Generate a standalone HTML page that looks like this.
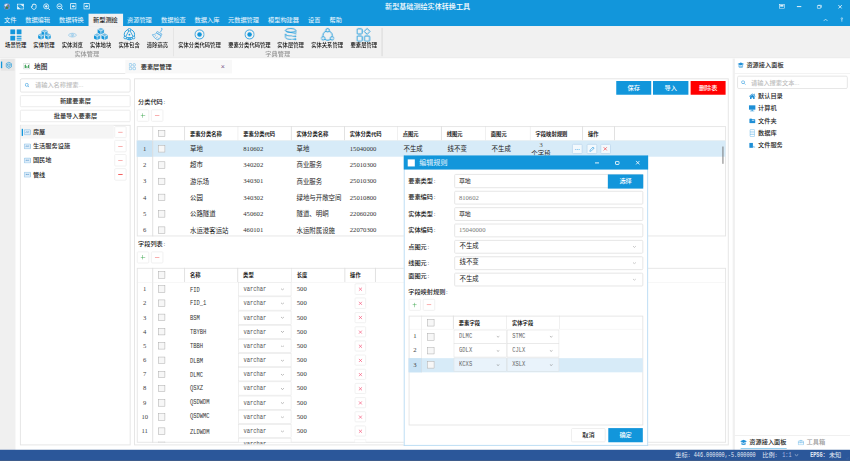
<!DOCTYPE html>
<html lang="zh-CN">
<head>
<meta charset="utf-8">
<title>新型基础测绘实体转换工具</title>
<style>
html,body{margin:0;padding:0;background:#f0f0f0;}
body{width:850px;height:461px;overflow:hidden;position:relative;}
#stage{position:absolute;left:0;top:0;width:1920px;height:1041.3px;transform-origin:0 0;transform:scale(0.4427083);
 font-family:"Liberation Sans","Noto Sans CJK SC",sans-serif;overflow:hidden;font-weight:500;}
#stage div{position:absolute;box-sizing:border-box;}
#stage .num{font-family:"Liberation Serif","Noto Sans CJK SC",serif;}
#stage .mono{font-family:"Liberation Mono","Noto Sans CJK SC",monospace;}
#stage .stat{font-family:"Liberation Serif","Noto Sans CJK SC",serif;}
</style>
</head>
<body>
<div id="stage">
<div style="left:0px;top:0px;width:1920px;height:58.5px;background:#1296db;"></div>
<svg style="position:absolute;left:7.91px;top:6.78px;" width="15.36" height="15.36" viewBox="0 0 24 24"><circle cx="12" cy="12" r="11.500" fill="#4f86c8"/><path d="M3 7c3-3 8-5 12-3-1 3-4 3-5 5s2 3 1 5-4 1-5-1-2-3-3-6z" fill="#e9eef6"/><path d="M8 11c3 0 6 1 8 4s-1 6-4 6-2-3-4-5-2-3 0-5z" fill="#4a7d3c"/><path d="M14 5c3 0 6 3 7 7-2 0-4-1-5-3s-2-2-2-4z" fill="#b9763a"/><path d="M4 17c3 1 4 3 6 5-3 0-5-2-6-5z" fill="#2b3f7a"/><circle cx="12" cy="12" r="11" fill="none" stroke="#a9c6e8" stroke-width="1.200"/></svg>
<svg style="position:absolute;left:37.72px;top:8.13px;" width="16.72" height="13.55" viewBox="0 0 28 22"><rect x="1.500" y="1.500" width="25" height="19" fill="none" stroke="#fff" stroke-width="2.600"/><path d="M12 2h14v11z" fill="#fff" opacity=".9"/><path d="M2 9l12 11H2z" fill="#fff" opacity=".85"/><path d="M2 3L26 19" stroke="#fff" stroke-width="1.200" opacity=".5"/></svg>
<svg style="position:absolute;left:67.54px;top:6.78px;" width="16.72" height="15.81" viewBox="0 0 24 24"><path d="M7 12V6.5a1.6 1.6 0 0 1 3.2 0V4.5a1.6 1.6 0 0 1 3.2 0V5a1.6 1.6 0 0 1 3.2 0v1.6a1.6 1.6 0 0 1 3.2 0V14c0 4.5-3 7.5-7.3 7.5-3.4 0-5.200-1.600-6.800-4.400L3.300 13.300c-.7-1.300.800-2.500 2-1.500z" fill="none" stroke="#fff" stroke-width="2.600" stroke-linejoin="round"/></svg>
<svg style="position:absolute;left:97.13px;top:6.55px;" width="16.72" height="16.72" viewBox="0 0 24 24"><circle cx="10.5" cy="10.500" r="8.200" fill="none" stroke="#fff" stroke-width="2.400"/><path d="M16.500 16.500L22.500 22.500" stroke="#fff" stroke-width="2.800"/><path d="M10.500 6v9M6 10.500h9" stroke="#fff" stroke-width="3"/></svg>
<svg style="position:absolute;left:126.72px;top:6.55px;" width="16.72" height="16.72" viewBox="0 0 24 24"><circle cx="10.5" cy="10.500" r="8.200" fill="none" stroke="#fff" stroke-width="2.400"/><path d="M16.500 16.500L22.500 22.500" stroke="#fff" stroke-width="2.800"/><path d="M6 10.500h9" stroke="#fff" stroke-width="3"/></svg>
<svg style="position:absolute;left:157.67px;top:7.45px;" width="15.36" height="14.46" viewBox="0 0 24 24"><rect x="2" y="2" width="20" height="20" fill="none" stroke="#fff" stroke-width="2.800"/><path d="M18 12H11" stroke="#fff" stroke-width="3.600" fill="none"/><path d="M6 12l6.500-5.500v11z" fill="#fff"/></svg>
<svg style="position:absolute;left:187.93px;top:7.45px;" width="15.36" height="14.46" viewBox="0 0 24 24"><rect x="2" y="2" width="20" height="20" fill="none" stroke="#fff" stroke-width="2.800"/><path d="M6 12H13" stroke="#fff" stroke-width="3.600" fill="none"/><path d="M18 12l-6.500-5.500v11z" fill="#fff"/></svg>
<div style="left:965.87px;transform:translateX(-50%);top:2.68px;font-size:16px;line-height:24.00px;color:#fff;white-space:nowrap;">新型基础测绘实体转换工具</div>
<svg style="position:absolute;left:1759.4px;top:9.49px;" width="14" height="10.62" viewBox="0 0 24 20"><rect x="1.2" y="1.2" width="21.600" height="17.600" fill="none" stroke="#fff" stroke-width="2.400"/><rect x="5" y="5" width="14" height="6" fill="#fff"/></svg>
<div style="left:1800.06px;top:14px;width:10.39px;height:1.69px;background:#fff;"></div>
<svg style="position:absolute;left:1845.46px;top:10.28px;" width="11.75" height="9.94" viewBox="0 0 22 18"><rect x="1.700" y="4.500" width="15" height="12" rx="2.500" fill="none" stroke="#fff" stroke-width="3.200"/><path d="M6 2h11.500c2 0 3 1 3 3v8" fill="none" stroke="#fff" stroke-width="2.400"/></svg>
<svg style="position:absolute;left:1891.54px;top:9.6px;" width="11.29" height="10.84" viewBox="0 0 20 20"><path d="M2.500 2.500l15 15M17.500 2.500L2.500 17.500" stroke="#fff" stroke-width="3.200"/></svg>
<svg style="position:absolute;left:1858.79px;top:42.01px;" width="11.75" height="6.78" viewBox="0 0 20 12"><path d="M2 10l8-8 8 8" stroke="#fff" stroke-width="2.400" fill="none"/></svg>
<svg style="position:absolute;left:1897.64px;top:39.3px;" width="7.23" height="10.84" viewBox="0 0 12 20"><circle cx="6" cy="5" r="3.400" fill="none" stroke="#fff" stroke-width="2.400"/><path d="M6 8.500v10" stroke="#fff" stroke-width="2.400"/></svg>
<div style="left:199.68px;top:31.17px;width:78.16px;height:28.01px;background:#f1f1f1;"></div>
<div style="left:9.26px;top:34.68px;font-size:14px;line-height:21.00px;color:#f2f9fe;white-space:nowrap;font-weight:400;">文件</div>
<div style="left:56.92px;top:34.68px;font-size:14px;line-height:21.00px;color:#f2f9fe;white-space:nowrap;font-weight:400;">数据编辑</div>
<div style="left:133.27px;top:34.68px;font-size:14px;line-height:21.00px;color:#f2f9fe;white-space:nowrap;font-weight:400;">数据转换</div>
<div style="left:210.07px;top:34.68px;font-size:14px;line-height:21.00px;color:#222;white-space:nowrap;">新型测绘</div>
<div style="left:286.87px;top:34.68px;font-size:14px;line-height:21.00px;color:#f2f9fe;white-space:nowrap;font-weight:400;">资源管理</div>
<div style="left:363.67px;top:34.68px;font-size:14px;line-height:21.00px;color:#f2f9fe;white-space:nowrap;font-weight:400;">数据检查</div>
<div style="left:439.57px;top:34.68px;font-size:14px;line-height:21.00px;color:#f2f9fe;white-space:nowrap;font-weight:400;">数据入库</div>
<div style="left:515.01px;top:34.68px;font-size:14px;line-height:21.00px;color:#f2f9fe;white-space:nowrap;font-weight:400;">元数据管理</div>
<div style="left:605.36px;top:34.68px;font-size:14px;line-height:21.00px;color:#f2f9fe;white-space:nowrap;font-weight:400;">模型构建器</div>
<div style="left:695.72px;top:34.68px;font-size:14px;line-height:21.00px;color:#f2f9fe;white-space:nowrap;font-weight:400;">设置</div>
<div style="left:744.28px;top:34.68px;font-size:14px;line-height:21.00px;color:#f2f9fe;white-space:nowrap;font-weight:400;">帮助</div>
<div style="left:0px;top:58.5px;width:1920px;height:73.41px;background:#f1f1f1;"></div>
<div style="left:0px;top:130.11px;width:1920px;height:1.81px;background:#e9e9e9;"></div>
<div style="left:391.68px;top:63.25px;width:1.13px;height:63.25px;background:#d5d5d5;"></div>
<div style="left:862.42px;top:63.25px;width:1.13px;height:63.25px;background:#d5d5d5;"></div>
<div style="left:196.07px;transform:translateX(-50%);top:111.70px;font-size:14px;line-height:21.00px;color:#999;white-space:nowrap;">实体管理</div>
<div style="left:627.28px;transform:translateX(-50%);top:111.70px;font-size:14px;line-height:21.00px;color:#999;white-space:nowrap;">字典管理</div>
<div style="left:35.46px;transform:translateX(-50%);top:93.10px;font-size:12px;line-height:18.00px;color:#111;white-space:nowrap;">场景管理</div>
<div style="left:99.39px;transform:translateX(-50%);top:93.10px;font-size:12px;line-height:18.00px;color:#111;white-space:nowrap;">实体管理</div>
<div style="left:163.31px;transform:translateX(-50%);top:93.10px;font-size:12px;line-height:18.00px;color:#111;white-space:nowrap;">实体浏览</div>
<div style="left:227.24px;transform:translateX(-50%);top:93.10px;font-size:12px;line-height:18.00px;color:#111;white-space:nowrap;">实体地块</div>
<div style="left:291.61px;transform:translateX(-50%);top:93.10px;font-size:12px;line-height:18.00px;color:#111;white-space:nowrap;">实体包含</div>
<div style="left:355.76px;transform:translateX(-50%);top:93.10px;font-size:12px;line-height:18.00px;color:#111;white-space:nowrap;">清除高亮</div>
<div style="left:450.64px;transform:translateX(-50%);top:93.10px;font-size:12px;line-height:18.00px;color:#111;white-space:nowrap;">实体分类代码管理</div>
<div style="left:563.35px;transform:translateX(-50%);top:93.10px;font-size:12px;line-height:18.00px;color:#111;white-space:nowrap;">要素分类代码管理</div>
<div style="left:656.41px;transform:translateX(-50%);top:93.10px;font-size:12px;line-height:18.00px;color:#111;white-space:nowrap;">实体层管理</div>
<div style="left:738.86px;transform:translateX(-50%);top:93.10px;font-size:12px;line-height:18.00px;color:#111;white-space:nowrap;">实体关系管理</div>
<div style="left:821.76px;transform:translateX(-50%);top:93.10px;font-size:12px;line-height:18.00px;color:#111;white-space:nowrap;">要素层管理</div>
<svg style="position:absolute;left:22.59px;top:66.07px;" width="25.98" height="25.98" viewBox="0 0 24 24"><rect x="0" y="0" width="10.400" height="10.400" rx="1.200" fill="#1296db"/><rect x="13.600" y="0" width="10.400" height="10.400" rx="1.200" fill="#1296db"/><rect x="0" y="13.600" width="10.400" height="10.400" rx="1.200" fill="#1296db"/><rect x="13.600" y="13.600" width="10.400" height="2.400" fill="#1296db"/><rect x="13.600" y="17.600" width="10.400" height="2.400" fill="#1296db"/><rect x="13.600" y="21.600" width="10.400" height="2.400" fill="#1296db"/></svg>
<svg style="position:absolute;left:85.61px;top:66.18px;" width="29.36" height="24.85" viewBox="0 0 24 20"><path d="M6.5 2.75 L12.0 0 L17.5 2.75 L12.0 5.5 Z" fill="#1296db" opacity=".55"/><path d="M6.5 2.75 L12.0 5.5 L12.0 11.55 L6.5 8.8 Z" fill="#1296db"/><path d="M17.5 2.75 L12.0 5.5 L12.0 11.55 L17.5 8.8 Z" fill="#1296db" opacity=".8"/><path d="M6.5 2.75 L12.0 5.5 L17.5 2.75 M12.0 5.5 L12.0 11.55" stroke="#fff" stroke-width=".9" fill="none"/><path d="M0 10.25 L5.5 7.5 L11 10.25 L5.5 13.0 Z" fill="#1296db" opacity=".55"/><path d="M0 10.25 L5.5 13.0 L5.5 19.05 L0 16.3 Z" fill="#1296db"/><path d="M11 10.25 L5.5 13.0 L5.5 19.05 L11 16.3 Z" fill="#1296db" opacity=".8"/><path d="M0 10.25 L5.5 13.0 L11 10.25 M5.5 13.0 L5.5 19.05" stroke="#fff" stroke-width=".9" fill="none"/><path d="M13 10.25 L18.5 7.5 L24 10.25 L18.5 13.0 Z" fill="#1296db" opacity=".55"/><path d="M13 10.25 L18.5 13.0 L18.5 19.05 L13 16.3 Z" fill="#1296db"/><path d="M24 10.25 L18.5 13.0 L18.5 19.05 L24 16.3 Z" fill="#1296db" opacity=".8"/><path d="M13 10.25 L18.5 13.0 L24 10.25 M18.5 13.0 L18.5 19.05" stroke="#fff" stroke-width=".9" fill="none"/></svg>
<svg style="position:absolute;left:152.92px;top:73.19px;" width="21.23" height="12.65" viewBox="0 0 32 20"><path d="M1 10C7 1 25 1 31 10C25 19 7 19 1 10Z" fill="none" stroke="#6db9e8" stroke-width="1.800"/><circle cx="16" cy="10" r="5" fill="none" stroke="#6db9e8" stroke-width="1.800"/><circle cx="16" cy="10" r="2" fill="#6db9e8"/></svg>
<svg style="position:absolute;left:212.33px;top:61.89px;" width="31.62" height="30.27" viewBox="0 0 24 22"><path d="M6.5 2.75 L12.0 0 L17.5 2.75 L12.0 5.5 Z" fill="#1296db" opacity=".55"/><path d="M6.5 2.75 L12.0 5.5 L12.0 11.55 L6.5 8.8 Z" fill="#1296db"/><path d="M17.5 2.75 L12.0 5.5 L12.0 11.55 L17.5 8.8 Z" fill="#1296db" opacity=".8"/><path d="M6.5 2.75 L12.0 5.5 L17.5 2.75 M12.0 5.5 L12.0 11.55" stroke="#fff" stroke-width=".9" fill="none"/><path d="M0 12.25 L5.5 9.5 L11 12.25 L5.5 15.0 Z" fill="#1296db" opacity=".55"/><path d="M0 12.25 L5.5 15.0 L5.5 21.05 L0 18.3 Z" fill="#1296db"/><path d="M11 12.25 L5.5 15.0 L5.5 21.05 L11 18.3 Z" fill="#1296db" opacity=".8"/><path d="M0 12.25 L5.5 15.0 L11 12.25 M5.5 15.0 L5.5 21.05" stroke="#fff" stroke-width=".9" fill="none"/><path d="M13 12.25 L18.5 9.5 L24 12.25 L18.5 15.0 Z" fill="#1296db" opacity=".55"/><path d="M13 12.25 L18.5 15.0 L18.5 21.05 L13 18.3 Z" fill="#1296db"/><path d="M24 12.25 L18.5 15.0 L18.5 21.05 L24 18.3 Z" fill="#1296db" opacity=".8"/><path d="M13 12.25 L18.5 15.0 L24 12.25 M18.5 15.0 L18.5 21.05" stroke="#fff" stroke-width=".9" fill="none"/></svg>
<svg style="position:absolute;left:277.5px;top:63.25px;" width="28.69" height="29.36" viewBox="0 0 24 25"><circle cx="12" cy="13" r="10" fill="none" stroke="#1296db" stroke-width="1.700"/><path d="M12 3.500L4 18.500h16z" fill="none" stroke="#1296db" stroke-width="1.500"/><circle cx="12" cy="3.400" r="2.500" fill="#f1f1f1" stroke="#1296db" stroke-width="1.500"/><circle cx="3.800" cy="18.600" r="2.500" fill="#f1f1f1" stroke="#1296db" stroke-width="1.500"/><circle cx="20.200" cy="18.600" r="2.500" fill="#f1f1f1" stroke="#1296db" stroke-width="1.500"/><circle cx="12" cy="13" r="1.700" fill="#1296db"/><rect x="8.500" y="20" width="7" height="2.400" fill="#1296db"/></svg>
<svg style="position:absolute;left:341.99px;top:61.89px;" width="28.46" height="30.27" viewBox="0 0 22 25"><path d="M17 1l2.500 1.500-3.500 6.500" fill="none" stroke="#5ab0e6" stroke-width="1.600"/><path d="M10 7.500l9 5-1.500 2.500-9-5z" fill="none" stroke="#5ab0e6" stroke-width="1.500"/><path d="M8.500 10.500C6 13 3.500 13.500 1 13.500c2 4 6 8.500 11 10 2.500-2 4.500-5 5.500-8z" fill="none" stroke="#5ab0e6" stroke-width="1.500"/><path d="M5 16.500l3-1.500M8 19.500l3-2M11 22l2.500-2.500" stroke="#5ab0e6" stroke-width="1.200"/></svg>
<svg style="position:absolute;left:438.89px;top:66.41px;" width="23.49" height="23.49" viewBox="0 0 24 24"><circle cx="12" cy="12" r="10.600" fill="none" stroke="#1296db" stroke-width="2"/><circle cx="12" cy="12" r="5.200" fill="#1296db"/></svg>
<svg style="position:absolute;left:551.6px;top:66.41px;" width="23.49" height="23.49" viewBox="0 0 24 24"><circle cx="12" cy="12" r="10.600" fill="none" stroke="#1296db" stroke-width="2"/><circle cx="12" cy="12" r="5.200" fill="#1296db"/></svg>
<svg style="position:absolute;left:643.31px;top:63.25px;" width="28.01" height="30.27" viewBox="0 0 23 25"><ellipse cx="11" cy="4.500" rx="9.500" ry="3.500" fill="none" stroke="#1296db" stroke-width="1.500"/><path d="M1.500 4.500c0 5 19 3 19 7.500M1.500 11c0 5 12 3.500 12 3.500M1.500 11c0 2 0 4.500 0 6.500c0 3 6 4 11 3.700M20.500 4.500v6" fill="none" stroke="#1296db" stroke-width="1.500"/><circle cx="19.500" cy="15.500" r="1.700" fill="#1296db"/><circle cx="19.500" cy="21" r="1.700" fill="#1296db"/><path d="M14 15.500h3.500M14 21h3.500" stroke="#1296db" stroke-width="1.500"/></svg>
<svg style="position:absolute;left:724.86px;top:62.8px;" width="29.82" height="30.72" viewBox="0 0 24 25"><circle cx="12" cy="14" r="8.600" fill="none" stroke="#1296db" stroke-width="1.700"/><circle cx="12" cy="4.200" r="3.200" fill="#f1f1f1" stroke="#1296db" stroke-width="1.600"/><circle cx="3.800" cy="19" r="3.200" fill="#f1f1f1" stroke="#1296db" stroke-width="1.600"/><circle cx="20.200" cy="19" r="3.200" fill="#f1f1f1" stroke="#1296db" stroke-width="1.600"/></svg>
<svg style="position:absolute;left:805.04px;top:63.02px;" width="32.53" height="31.17" viewBox="0 0 25 24"><rect x="1" y="1.500" width="9" height="9" rx="1.500" fill="none" stroke="#1296db" stroke-width="1.600"/><path d="M18.500 0.800l5 5.200-5 5.200-5-5.200z" fill="none" stroke="#1296db" stroke-width="1.600"/><rect x="1" y="14" width="9" height="9" rx="1.500" fill="none" stroke="#1296db" stroke-width="1.600"/><rect x="14" y="14" width="9" height="9" rx="1.500" fill="none" stroke="#1296db" stroke-width="1.600"/></svg>
<div style="left:0px;top:132.14px;width:1920px;height:883.88px;background:#f0f0f0;"></div>
<div style="left:35.46px;top:132.14px;width:1620.03px;height:883.88px;background:#fff;"></div>
<div style="left:2.26px;top:133.04px;width:31.17px;height:26.65px;background:#e6e6e6;"></div>
<div style="left:2.26px;top:139.14px;width:2.48px;height:14.46px;background:#1296db;"></div>
<svg style="position:absolute;left:12.42px;top:138.92px;" width="15.81" height="16.72" viewBox="0 0 24 24"><path d="M12 1.500l9 5v11l-9 5-9-5v-11z" fill="none" stroke="#1296db" stroke-width="2.200"/><ellipse cx="12" cy="9.500" rx="4.600" ry="2.200" fill="none" stroke="#1296db" stroke-width="1.800"/><path d="M7.400 9.500v5c0 1.200 2 2.200 4.600 2.200s4.600-1 4.600-2.200v-5" fill="none" stroke="#1296db" stroke-width="1.800"/></svg>
<div style="left:283.03px;top:135.08px;width:240.56px;height:31.17px;background:#f8f8f8;"></div>
<div style="left:44.27px;top:165.35px;width:238.76px;height:1.36px;background:#e6e6e6;"></div>
<svg style="position:absolute;left:52.63px;top:143.44px;" width="14.91" height="13.55" viewBox="0 0 22 20"><rect x="1" y="1" width="20" height="18" fill="#fff" stroke="#9aa" stroke-width="1.400"/><path d="M4 16V6l4-2v12zM10 16V8l3 2v6zM15 16V5l3 1v10z" fill="#2e9a4a"/></svg>
<div style="left:76.8px;top:139.19px;font-size:15px;line-height:22.50px;color:#222;white-space:nowrap;">地图</div>
<svg style="position:absolute;left:291.39px;top:141.85px;" width="15.81" height="17.17" viewBox="0 0 24 24.500"><rect x="1" y="1.500" width="9" height="9" rx="2.500" fill="none" stroke="#4aa8e2" stroke-width="1.600"/><rect x="14" y="1.500" width="9" height="9" rx="4.500" fill="none" stroke="#4aa8e2" stroke-width="1.600"/><rect x="1" y="14" width="9" height="9" rx="2.500" fill="none" stroke="#4aa8e2" stroke-width="1.600"/><rect x="14" y="14" width="9" height="9" rx="2.500" fill="none" stroke="#4aa8e2" stroke-width="1.600"/></svg>
<div style="left:317.82px;top:139.94px;font-size:14px;line-height:21.00px;color:#222;white-space:nowrap;font-weight:500;">要素层管理</div>
<div style="left:503.27px;transform:translateX(-50%);top:138.66px;font-size:16px;line-height:24.00px;color:#7a5a8a;white-space:nowrap;font-weight:400;">×</div>
<div style="left:45.4px;top:176.87px;width:249.37px;height:32.08px;background:#fff;border:2px solid #e3e3e3;border-radius:4px;"></div>
<svg style="position:absolute;left:55.79px;top:187.48px;" width="10.39" height="10.84" viewBox="0 0 20 20"><circle cx="8.500" cy="8.500" r="6.500" fill="none" stroke="#3a9fe0" stroke-width="2.800"/><path d="M13.500 13.500L19 19" stroke="#3a9fe0" stroke-width="3"/></svg>
<div style="left:79.06px;top:182.40px;font-size:14px;line-height:21.00px;color:#bdbdbd;white-space:nowrap;">请输入名称搜索...</div>
<div style="left:45.4px;top:214.59px;width:249.37px;height:27.78px;background:#fff;border:2px solid #e9e9e9;border-radius:3px;"></div>
<div style="left:170.32px;transform:translateX(-50%);top:218.09px;font-size:14px;line-height:21.00px;color:#222;white-space:nowrap;">新建要素层</div>
<div style="left:45.4px;top:248.24px;width:249.37px;height:28.24px;background:#fff;border:2px solid #e9e9e9;border-radius:3px;"></div>
<div style="left:170.32px;transform:translateX(-50%);top:251.75px;font-size:14px;line-height:21.00px;color:#222;white-space:nowrap;">批量导入要素层</div>
<div style="left:45.4px;top:281.9px;width:249.37px;height:724.4px;background:#fff;border:2px solid #e3e3e3;"></div>
<div style="left:46.76px;top:283.48px;width:210.3px;height:29.82px;background:#f5f5f5;"></div>
<div style="left:49.13px;top:291.16px;width:2.71px;height:15.59px;background:#1296db;"></div>
<svg style="position:absolute;left:53.99px;top:292.29px;" width="15.59" height="13.33" viewBox="0 0 24 20"><rect x="1" y="1" width="22" height="18" rx="2" fill="#dcecf9" stroke="#5aa7dc" stroke-width="1.600"/><path d="M6 11c2-3 4-3 6 0M12 9h6" stroke="#2c7fc0" stroke-width="1.800" fill="none"/></svg>
<div style="left:74.32px;top:288.12px;font-size:14px;line-height:21.00px;color:#222;white-space:nowrap;">房屋</div>
<div style="left:258.18px;top:284.61px;width:28.24px;height:27.78px;background:#fff;border:2px solid #efefef;border-radius:3px;"></div>
<div style="left:267.22px;top:297.94px;width:9.49px;height:1.36px;background:#f24a4a;"></div>
<svg style="position:absolute;left:53.99px;top:324.14px;" width="15.59" height="13.33" viewBox="0 0 24 20"><rect x="1" y="1" width="22" height="18" rx="2" fill="#dcecf9" stroke="#5aa7dc" stroke-width="1.600"/><path d="M6 11c2-3 4-3 6 0M12 9h6" stroke="#2c7fc0" stroke-width="1.800" fill="none"/></svg>
<div style="left:74.32px;top:319.97px;font-size:14px;line-height:21.00px;color:#222;white-space:nowrap;">生活服务设施</div>
<div style="left:258.18px;top:316.46px;width:28.24px;height:27.78px;background:#fff;border:2px solid #efefef;border-radius:3px;"></div>
<div style="left:267.22px;top:329.79px;width:9.49px;height:1.36px;background:#f24a4a;"></div>
<svg style="position:absolute;left:53.99px;top:355.99px;" width="15.59" height="13.33" viewBox="0 0 24 20"><rect x="1" y="1" width="22" height="18" rx="2" fill="#dcecf9" stroke="#5aa7dc" stroke-width="1.600"/><path d="M6 11c2-3 4-3 6 0M12 9h6" stroke="#2c7fc0" stroke-width="1.800" fill="none"/></svg>
<div style="left:74.32px;top:351.82px;font-size:14px;line-height:21.00px;color:#222;white-space:nowrap;">国民地</div>
<div style="left:258.18px;top:348.31px;width:28.24px;height:27.78px;background:#fff;border:2px solid #efefef;border-radius:3px;"></div>
<div style="left:267.22px;top:361.64px;width:9.49px;height:1.36px;background:#f24a4a;"></div>
<svg style="position:absolute;left:53.99px;top:387.84px;" width="15.59" height="13.33" viewBox="0 0 24 20"><rect x="1" y="1" width="22" height="18" rx="2" fill="#dcecf9" stroke="#5aa7dc" stroke-width="1.600"/><path d="M6 11c2-3 4-3 6 0M12 9h6" stroke="#2c7fc0" stroke-width="1.800" fill="none"/></svg>
<div style="left:74.32px;top:383.66px;font-size:14px;line-height:21.00px;color:#222;white-space:nowrap;">管线</div>
<div style="left:258.18px;top:380.16px;width:28.24px;height:27.78px;background:#fff;border:2px solid #efefef;border-radius:3px;"></div>
<div style="left:267.22px;top:393.49px;width:9.49px;height:1.36px;background:#f24a4a;"></div>
<div style="left:303.36px;top:176.64px;width:1342.19px;height:829.67px;background:#fff;border:2px solid #e3e3e3;"></div>
<div style="left:1391.66px;top:183.19px;width:79.28px;height:31.17px;background:#1296db;"></div>
<div style="left:1431.3px;transform:translateX(-50%);top:188.28px;font-size:14px;line-height:21.00px;color:#fff;white-space:nowrap;">保存</div>
<div style="left:1475.46px;top:183.19px;width:79.51px;height:31.17px;background:#1296db;"></div>
<div style="left:1515.22px;transform:translateX(-50%);top:188.28px;font-size:14px;line-height:21.00px;color:#fff;white-space:nowrap;">导入</div>
<div style="left:1559.94px;top:183.19px;width:79.51px;height:31.17px;background:#ff0000;"></div>
<div style="left:1599.7px;transform:translateX(-50%);top:188.28px;font-size:14px;line-height:21.00px;color:#fff;white-space:nowrap;">删除表</div>
<div style="left:311.72px;top:219.00px;font-size:14px;line-height:21.00px;color:#222;white-space:nowrap;">分类代码<span style="margin-left:1.5px">:</span></div>
<div style="left:308.78px;top:247.12px;width:28.01px;height:27.56px;background:#fff;border:2px solid #efefef;border-radius:3px;"></div>
<div style="left:317.82px;top:260.33px;width:9.94px;height:1.13px;background:#35a247;"></div>
<div style="left:322.22px;top:255.92px;width:1.13px;height:9.94px;background:#35a247;"></div>
<div style="left:341.31px;top:247.12px;width:28.01px;height:27.56px;background:#fff;border:2px solid #efefef;border-radius:3px;"></div>
<div style="left:350.34px;top:260.33px;width:9.94px;height:1.13px;background:#f24a4a;"></div>
<div style="left:308.78px;top:285.29px;width:1330.9px;height:248.92px;background:#fff;border:2px solid #e4e4e4;"></div>
<div style="left:309.46px;top:317.36px;width:1329.54px;height:36.37px;background:#d7ebf8;"></div>
<div style="left:309.46px;top:317.36px;width:35.46px;height:36.37px;background:#c9e3f5;"></div>
<div style="left:344.13px;top:285.29px;width:1.58px;height:32.08px;background:#dedede;"></div>
<div style="left:416.41px;top:285.29px;width:1.58px;height:32.08px;background:#dedede;"></div>
<div style="left:536.81px;top:285.29px;width:1.58px;height:32.08px;background:#dedede;"></div>
<div style="left:656.98px;top:285.29px;width:1.58px;height:32.08px;background:#dedede;"></div>
<div style="left:777.37px;top:285.29px;width:1.58px;height:32.08px;background:#dedede;"></div>
<div style="left:896.87px;top:285.29px;width:1.58px;height:32.08px;background:#dedede;"></div>
<div style="left:996.25px;top:285.29px;width:1.58px;height:32.08px;background:#dedede;"></div>
<div style="left:1095.87px;top:285.29px;width:1.58px;height:32.08px;background:#dedede;"></div>
<div style="left:1196.84px;top:285.29px;width:1.58px;height:32.08px;background:#dedede;"></div>
<div style="left:1315.2px;top:285.29px;width:1.58px;height:32.08px;background:#dedede;"></div>
<div style="left:1387.48px;top:285.29px;width:1.58px;height:32.08px;background:#dedede;"></div>
<div style="left:344.13px;top:317.36px;width:1.58px;height:216.85px;background:#dedede;"></div>
<div style="left:308.78px;top:316.91px;width:1330.9px;height:0.9px;background:#ececec;"></div>
<div style="left:429.18px;top:293.86px;font-size:12px;line-height:18.00px;color:#222;white-space:nowrap;font-weight:bold;">要素分类名称</div>
<div style="left:549.57px;top:293.86px;font-size:12px;line-height:18.00px;color:#222;white-space:nowrap;font-weight:bold;">要素分类代码</div>
<div style="left:669.74px;top:293.86px;font-size:12px;line-height:18.00px;color:#222;white-space:nowrap;font-weight:bold;">实体分类名称</div>
<div style="left:790.14px;top:293.86px;font-size:12px;line-height:18.00px;color:#222;white-space:nowrap;font-weight:bold;">实体分类代码</div>
<div style="left:909.63px;top:293.86px;font-size:12px;line-height:18.00px;color:#222;white-space:nowrap;font-weight:bold;">点图元</div>
<div style="left:1009.02px;top:293.86px;font-size:12px;line-height:18.00px;color:#222;white-space:nowrap;font-weight:bold;">线图元</div>
<div style="left:1108.63px;top:293.86px;font-size:12px;line-height:18.00px;color:#222;white-space:nowrap;font-weight:bold;">面图元</div>
<div style="left:1209.6px;top:293.86px;font-size:12px;line-height:18.00px;color:#222;white-space:nowrap;font-weight:bold;">字段映射规则</div>
<div style="left:1327.96px;top:293.86px;font-size:12px;line-height:18.00px;color:#222;white-space:nowrap;font-weight:bold;">操作</div>
<div style="left:356.89px;top:293.65px;width:15.81px;height:15.81px;background:#f7f7f7;border:1.6px solid #a4a4a4;"></div>
<div class="num" style="left:326.85px;transform:translateX(-50%);top:324.64px;font-size:15px;line-height:22.50px;color:#444;white-space:nowrap;">1</div>
<div style="left:356.89px;top:327.98px;width:15.81px;height:15.81px;background:#f7f7f7;border:1.6px solid #a4a4a4;"></div>
<div style="left:429.18px;top:325.01px;font-size:14.5px;line-height:21.75px;color:#222;white-space:nowrap;font-weight:400;">草地</div>
<div class="num" style="left:549.57px;top:324.64px;font-size:15px;line-height:22.50px;color:#333;white-space:nowrap;">810602</div>
<div style="left:669.74px;top:325.01px;font-size:14.5px;line-height:21.75px;color:#222;white-space:nowrap;font-weight:400;">草地</div>
<div class="num" style="left:790.14px;top:324.64px;font-size:15px;line-height:22.50px;color:#333;white-space:nowrap;">15040000</div>
<div class="num" style="left:326.85px;transform:translateX(-50%);top:361.41px;font-size:15px;line-height:22.50px;color:#444;white-space:nowrap;">2</div>
<div style="left:356.89px;top:364.75px;width:15.81px;height:15.81px;background:#f7f7f7;border:1.6px solid #a4a4a4;"></div>
<div style="left:429.18px;top:361.79px;font-size:14.5px;line-height:21.75px;color:#222;white-space:nowrap;font-weight:400;">超市</div>
<div class="num" style="left:549.57px;top:361.41px;font-size:15px;line-height:22.50px;color:#333;white-space:nowrap;">340202</div>
<div style="left:669.74px;top:361.79px;font-size:14.5px;line-height:21.75px;color:#222;white-space:nowrap;font-weight:400;">商业服务</div>
<div class="num" style="left:790.14px;top:361.41px;font-size:15px;line-height:22.50px;color:#333;white-space:nowrap;">25010300</div>
<div class="num" style="left:326.85px;transform:translateX(-50%);top:398.18px;font-size:15px;line-height:22.50px;color:#444;white-space:nowrap;">3</div>
<div style="left:356.89px;top:401.53px;width:15.81px;height:15.81px;background:#f7f7f7;border:1.6px solid #a4a4a4;"></div>
<div style="left:429.18px;top:399.94px;font-size:14.5px;line-height:21.75px;color:#222;white-space:nowrap;font-weight:400;">游乐场</div>
<div class="num" style="left:549.57px;top:398.18px;font-size:15px;line-height:22.50px;color:#333;white-space:nowrap;">340301</div>
<div style="left:669.74px;top:399.94px;font-size:14.5px;line-height:21.75px;color:#222;white-space:nowrap;font-weight:400;">商业服务</div>
<div class="num" style="left:790.14px;top:398.18px;font-size:15px;line-height:22.50px;color:#333;white-space:nowrap;">25010300</div>
<div class="num" style="left:326.85px;transform:translateX(-50%);top:434.96px;font-size:15px;line-height:22.50px;color:#444;white-space:nowrap;">4</div>
<div style="left:356.89px;top:438.3px;width:15.81px;height:15.81px;background:#f7f7f7;border:1.6px solid #a4a4a4;"></div>
<div style="left:429.18px;top:437.21px;font-size:14.5px;line-height:21.75px;color:#222;white-space:nowrap;font-weight:400;">公园</div>
<div class="num" style="left:549.57px;top:434.96px;font-size:15px;line-height:22.50px;color:#333;white-space:nowrap;">340302</div>
<div style="left:669.74px;top:437.21px;font-size:14.5px;line-height:21.75px;color:#222;white-space:nowrap;font-weight:400;">绿地与开敞空间</div>
<div class="num" style="left:790.14px;top:434.96px;font-size:15px;line-height:22.50px;color:#333;white-space:nowrap;">25010800</div>
<div class="num" style="left:326.85px;transform:translateX(-50%);top:471.73px;font-size:15px;line-height:22.50px;color:#444;white-space:nowrap;">5</div>
<div style="left:356.89px;top:475.08px;width:15.81px;height:15.81px;background:#f7f7f7;border:1.6px solid #a4a4a4;"></div>
<div style="left:429.18px;top:472.11px;font-size:14.5px;line-height:21.75px;color:#222;white-space:nowrap;font-weight:400;">公路隧道</div>
<div class="num" style="left:549.57px;top:471.73px;font-size:15px;line-height:22.50px;color:#333;white-space:nowrap;">450602</div>
<div style="left:669.74px;top:472.11px;font-size:14.5px;line-height:21.75px;color:#222;white-space:nowrap;font-weight:400;">隧道、明峒</div>
<div class="num" style="left:790.14px;top:471.73px;font-size:15px;line-height:22.50px;color:#333;white-space:nowrap;">22060200</div>
<div class="num" style="left:326.85px;transform:translateX(-50%);top:508.51px;font-size:15px;line-height:22.50px;color:#444;white-space:nowrap;">6</div>
<div style="left:356.89px;top:511.85px;width:15.81px;height:15.81px;background:#f7f7f7;border:1.6px solid #a4a4a4;"></div>
<div style="left:429.18px;top:511.05px;font-size:14.5px;line-height:21.75px;color:#222;white-space:nowrap;font-weight:400;">水运港客运站</div>
<div class="num" style="left:549.57px;top:508.51px;font-size:15px;line-height:22.50px;color:#333;white-space:nowrap;">460101</div>
<div style="left:669.74px;top:511.05px;font-size:14.5px;line-height:21.75px;color:#222;white-space:nowrap;font-weight:400;">水运附属设施</div>
<div class="num" style="left:790.14px;top:508.51px;font-size:15px;line-height:22.50px;color:#333;white-space:nowrap;">22070300</div>
<div style="left:911.44px;top:325.55px;font-size:14.5px;line-height:21.75px;color:#222;white-space:nowrap;font-weight:400;">不生成</div>
<div style="left:1011.05px;top:325.55px;font-size:14.5px;line-height:21.75px;color:#222;white-space:nowrap;font-weight:400;">线不变</div>
<div style="left:1110.44px;top:325.55px;font-size:14.5px;line-height:21.75px;color:#222;white-space:nowrap;font-weight:400;">不生成</div>
<div class="num" style="left:1221.8px;transform:translateX(-50%);top:315.76px;font-size:16px;line-height:24.00px;color:#555;white-space:nowrap;">3</div>
<div style="left:1222.02px;transform:translateX(-50%);top:336.53px;font-size:14.5px;line-height:21.75px;color:#222;white-space:nowrap;font-weight:400;">个字段</div>
<div style="left:1292.05px;top:325.04px;width:23.72px;height:23.27px;background:#f3f9fd;border:2px solid #bfdaef;border-radius:3px;"></div>
<div style="left:1325.25px;top:325.04px;width:23.49px;height:23.27px;background:#f3f9fd;border:2px solid #bfdaef;border-radius:3px;"></div>
<div style="left:1355.52px;top:325.04px;width:24.17px;height:23.27px;background:#f3f9fd;border:2px solid #bfdaef;border-radius:3px;"></div>
<div style="left:1304.02px;transform:translateX(-50%);top:328.24px;font-size:12px;line-height:18.00px;color:#3ea4e6;white-space:nowrap;font-weight:bold;">···</div>
<svg style="position:absolute;left:1329.77px;top:329.79px;" width="14.46" height="14" viewBox="0 0 20 20"><path d="M3 17l1-4.500 9.500-9.500 3.500 3.500-9.500 9.500z" fill="none" stroke="#2f9be0" stroke-width="1.900"/><path d="M11.500 5l3.500 3.500" stroke="#2f9be0" stroke-width="1.600"/></svg>
<svg style="position:absolute;left:1362.3px;top:331.37px;" width="10.39" height="10.39" viewBox="0 0 20 20"><path d="M3 3l14 14M17 3L3 17" stroke="#f0353a" stroke-width="2.800"/></svg>
<div style="left:1631.77px;top:330.69px;width:1.81px;height:39.3px;background:#6a6a6a;"></div>
<div style="left:311.72px;top:540.20px;font-size:14px;line-height:21.00px;color:#222;white-space:nowrap;">字段列表<span style="margin-left:1.5px">:</span></div>
<div style="left:308.78px;top:567.64px;width:28.01px;height:27.56px;background:#fff;border:2px solid #efefef;border-radius:3px;"></div>
<div style="left:317.82px;top:580.86px;width:9.94px;height:1.13px;background:#35a247;"></div>
<div style="left:322.22px;top:576.45px;width:1.13px;height:9.94px;background:#35a247;"></div>
<div style="left:341.31px;top:567.64px;width:28.01px;height:27.56px;background:#fff;border:2px solid #efefef;border-radius:3px;"></div>
<div style="left:350.34px;top:580.86px;width:9.94px;height:1.13px;background:#f24a4a;"></div>
<div style="left:308.78px;top:605.36px;width:1330.9px;height:394.16px;background:#fff;border:2px solid #e4e4e4;overflow:hidden;"></div>
<div style="left:344.36px;top:605.36px;width:1.58px;height:31.85px;background:#dedede;"></div>
<div style="left:416.41px;top:605.36px;width:1.58px;height:31.85px;background:#dedede;"></div>
<div style="left:536.36px;top:605.36px;width:1.58px;height:31.85px;background:#dedede;"></div>
<div style="left:657.66px;top:605.36px;width:1.58px;height:31.85px;background:#dedede;"></div>
<div style="left:778.05px;top:605.36px;width:1.58px;height:31.85px;background:#dedede;"></div>
<div style="left:847.17px;top:605.36px;width:1.58px;height:31.85px;background:#dedede;"></div>
<div style="left:344.36px;top:637.21px;width:1.58px;height:362.32px;background:#dedede;"></div>
<div style="left:308.78px;top:636.76px;width:1330.9px;height:0.9px;background:#ececec;"></div>
<div style="left:429.18px;top:612.40px;font-size:12px;line-height:18.00px;color:#222;white-space:nowrap;font-weight:bold;">名称</div>
<div style="left:549.12px;top:612.40px;font-size:12px;line-height:18.00px;color:#222;white-space:nowrap;font-weight:bold;">类型</div>
<div style="left:670.42px;top:612.40px;font-size:12px;line-height:18.00px;color:#222;white-space:nowrap;font-weight:bold;">长度</div>
<div style="left:790.81px;top:612.40px;font-size:12px;line-height:18.00px;color:#222;white-space:nowrap;font-weight:bold;">操作</div>
<div style="left:356.89px;top:613.27px;width:15.81px;height:15.81px;background:#f7f7f7;border:1.6px solid #a4a4a4;"></div>
<div class="num" style="left:326.85px;transform:translateX(-50%);top:641.78px;font-size:15px;line-height:22.50px;color:#444;white-space:nowrap;">1</div>
<div style="left:356.89px;top:645.12px;width:15.81px;height:15.81px;background:#f7f7f7;border:1.6px solid #a4a4a4;"></div>
<div class="mono" style="left:429.18px;top:644.67px;font-size:15px;line-height:22.50px;color:#333;white-space:nowrap;transform:scaleX(.82);transform-origin:0 50%;">FID</div>
<div class="num" style="left:670.42px;top:641.78px;font-size:15px;line-height:22.50px;color:#333;white-space:nowrap;">500</div>
<div style="left:538.28px;top:637.44px;width:119.72px;height:31.17px;background:#fff;border:1px solid #dcdcdc;"></div>
<div class="mono" style="left:549.8px;top:642.63px;font-size:15px;line-height:22.50px;color:#555;white-space:nowrap;transform:scaleX(.82);transform-origin:0 50%;">varchar</div>
<svg style="position:absolute;left:633.83px;top:651.22px;" width="8.13" height="4.97" viewBox="0 0 20 12"><path d="M2 2l8 7.500 8-7.500" stroke="#777" stroke-width="3" fill="none"/></svg>
<div style="left:800.98px;top:640.38px;width:25.75px;height:25.3px;background:#fff;border:2px solid #efefef;border-radius:3px;"></div>
<svg style="position:absolute;left:808.66px;top:648.28px;" width="10.39" height="10.39" viewBox="0 0 20 20"><path d="M3 3l14 14M17 3L3 17" stroke="#f5466c" stroke-width="2.600"/></svg>
<div class="num" style="left:326.85px;transform:translateX(-50%);top:673.85px;font-size:15px;line-height:22.50px;color:#444;white-space:nowrap;">2</div>
<div style="left:356.89px;top:677.2px;width:15.81px;height:15.81px;background:#f7f7f7;border:1.6px solid #a4a4a4;"></div>
<div class="mono" style="left:429.18px;top:673.85px;font-size:15px;line-height:22.50px;color:#333;white-space:nowrap;transform:scaleX(.82);transform-origin:0 50%;">FID_1</div>
<div class="num" style="left:670.42px;top:673.85px;font-size:15px;line-height:22.50px;color:#333;white-space:nowrap;">500</div>
<div style="left:538.28px;top:669.52px;width:119.72px;height:31.17px;background:#fff;border:1px solid #dcdcdc;"></div>
<div class="mono" style="left:549.8px;top:675.07px;font-size:15px;line-height:22.50px;color:#555;white-space:nowrap;transform:scaleX(.82);transform-origin:0 50%;">varchar</div>
<svg style="position:absolute;left:633.83px;top:683.29px;" width="8.13" height="4.97" viewBox="0 0 20 12"><path d="M2 2l8 7.500 8-7.500" stroke="#777" stroke-width="3" fill="none"/></svg>
<div style="left:800.98px;top:672.45px;width:25.75px;height:25.3px;background:#fff;border:2px solid #efefef;border-radius:3px;"></div>
<svg style="position:absolute;left:808.66px;top:680.36px;" width="10.39" height="10.39" viewBox="0 0 20 20"><path d="M3 3l14 14M17 3L3 17" stroke="#f5466c" stroke-width="2.600"/></svg>
<div class="num" style="left:326.85px;transform:translateX(-50%);top:705.93px;font-size:15px;line-height:22.50px;color:#444;white-space:nowrap;">3</div>
<div style="left:356.89px;top:709.27px;width:15.81px;height:15.81px;background:#f7f7f7;border:1.6px solid #a4a4a4;"></div>
<div class="mono" style="left:429.18px;top:707.73px;font-size:15px;line-height:22.50px;color:#333;white-space:nowrap;transform:scaleX(.82);transform-origin:0 50%;">BSM</div>
<div class="num" style="left:670.42px;top:705.93px;font-size:15px;line-height:22.50px;color:#333;white-space:nowrap;">500</div>
<div style="left:538.28px;top:701.59px;width:119.72px;height:31.17px;background:#fff;border:1px solid #dcdcdc;"></div>
<div class="mono" style="left:549.8px;top:707.51px;font-size:15px;line-height:22.50px;color:#555;white-space:nowrap;transform:scaleX(.82);transform-origin:0 50%;">varchar</div>
<svg style="position:absolute;left:633.83px;top:715.37px;" width="8.13" height="4.97" viewBox="0 0 20 12"><path d="M2 2l8 7.500 8-7.500" stroke="#777" stroke-width="3" fill="none"/></svg>
<div style="left:800.98px;top:704.53px;width:25.75px;height:25.3px;background:#fff;border:2px solid #efefef;border-radius:3px;"></div>
<svg style="position:absolute;left:808.66px;top:712.43px;" width="10.39" height="10.39" viewBox="0 0 20 20"><path d="M3 3l14 14M17 3L3 17" stroke="#f5466c" stroke-width="2.600"/></svg>
<div class="num" style="left:326.85px;transform:translateX(-50%);top:738.00px;font-size:15px;line-height:22.50px;color:#444;white-space:nowrap;">4</div>
<div style="left:356.89px;top:741.35px;width:15.81px;height:15.81px;background:#f7f7f7;border:1.6px solid #a4a4a4;"></div>
<div class="mono" style="left:429.18px;top:740.17px;font-size:15px;line-height:22.50px;color:#333;white-space:nowrap;transform:scaleX(.82);transform-origin:0 50%;">TBYBH</div>
<div class="num" style="left:670.42px;top:738.00px;font-size:15px;line-height:22.50px;color:#333;white-space:nowrap;">500</div>
<div style="left:538.28px;top:733.67px;width:119.72px;height:31.17px;background:#fff;border:1px solid #dcdcdc;"></div>
<div class="mono" style="left:549.8px;top:739.94px;font-size:15px;line-height:22.50px;color:#555;white-space:nowrap;transform:scaleX(.82);transform-origin:0 50%;">varchar</div>
<svg style="position:absolute;left:633.83px;top:747.44px;" width="8.13" height="4.97" viewBox="0 0 20 12"><path d="M2 2l8 7.500 8-7.500" stroke="#777" stroke-width="3" fill="none"/></svg>
<div style="left:800.98px;top:736.6px;width:25.75px;height:25.3px;background:#fff;border:2px solid #efefef;border-radius:3px;"></div>
<svg style="position:absolute;left:808.66px;top:744.51px;" width="10.39" height="10.39" viewBox="0 0 20 20"><path d="M3 3l14 14M17 3L3 17" stroke="#f5466c" stroke-width="2.600"/></svg>
<div class="num" style="left:326.85px;transform:translateX(-50%);top:770.08px;font-size:15px;line-height:22.50px;color:#444;white-space:nowrap;">5</div>
<div style="left:356.89px;top:773.42px;width:15.81px;height:15.81px;background:#f7f7f7;border:1.6px solid #a4a4a4;"></div>
<div class="mono" style="left:429.18px;top:772.61px;font-size:15px;line-height:22.50px;color:#333;white-space:nowrap;transform:scaleX(.82);transform-origin:0 50%;">TBBH</div>
<div class="num" style="left:670.42px;top:770.08px;font-size:15px;line-height:22.50px;color:#333;white-space:nowrap;">500</div>
<div style="left:538.28px;top:765.74px;width:119.72px;height:31.17px;background:#fff;border:1px solid #dcdcdc;"></div>
<div class="mono" style="left:549.8px;top:770.57px;font-size:15px;line-height:22.50px;color:#555;white-space:nowrap;transform:scaleX(.82);transform-origin:0 50%;">varchar</div>
<svg style="position:absolute;left:633.83px;top:779.52px;" width="8.13" height="4.97" viewBox="0 0 20 12"><path d="M2 2l8 7.500 8-7.500" stroke="#777" stroke-width="3" fill="none"/></svg>
<div style="left:800.98px;top:768.68px;width:25.75px;height:25.3px;background:#fff;border:2px solid #efefef;border-radius:3px;"></div>
<svg style="position:absolute;left:808.66px;top:776.58px;" width="10.39" height="10.39" viewBox="0 0 20 20"><path d="M3 3l14 14M17 3L3 17" stroke="#f5466c" stroke-width="2.600"/></svg>
<div class="num" style="left:326.85px;transform:translateX(-50%);top:802.15px;font-size:15px;line-height:22.50px;color:#444;white-space:nowrap;">6</div>
<div style="left:356.89px;top:805.5px;width:15.81px;height:15.81px;background:#f7f7f7;border:1.6px solid #a4a4a4;"></div>
<div class="mono" style="left:429.18px;top:805.04px;font-size:15px;line-height:22.50px;color:#333;white-space:nowrap;transform:scaleX(.82);transform-origin:0 50%;">DLBM</div>
<div class="num" style="left:670.42px;top:802.15px;font-size:15px;line-height:22.50px;color:#333;white-space:nowrap;">500</div>
<div style="left:538.28px;top:797.82px;width:119.72px;height:31.17px;background:#fff;border:1px solid #dcdcdc;"></div>
<div class="mono" style="left:549.8px;top:803.01px;font-size:15px;line-height:22.50px;color:#555;white-space:nowrap;transform:scaleX(.82);transform-origin:0 50%;">varchar</div>
<svg style="position:absolute;left:633.83px;top:811.6px;" width="8.13" height="4.97" viewBox="0 0 20 12"><path d="M2 2l8 7.500 8-7.500" stroke="#777" stroke-width="3" fill="none"/></svg>
<div style="left:800.98px;top:800.75px;width:25.75px;height:25.3px;background:#fff;border:2px solid #efefef;border-radius:3px;"></div>
<svg style="position:absolute;left:808.66px;top:808.66px;" width="10.39" height="10.39" viewBox="0 0 20 20"><path d="M3 3l14 14M17 3L3 17" stroke="#f5466c" stroke-width="2.600"/></svg>
<div class="num" style="left:326.85px;transform:translateX(-50%);top:834.23px;font-size:15px;line-height:22.50px;color:#444;white-space:nowrap;">7</div>
<div style="left:356.89px;top:837.57px;width:15.81px;height:15.81px;background:#f7f7f7;border:1.6px solid #a4a4a4;"></div>
<div class="mono" style="left:429.18px;top:837.48px;font-size:15px;line-height:22.50px;color:#333;white-space:nowrap;transform:scaleX(.82);transform-origin:0 50%;">DLMC</div>
<div class="num" style="left:670.42px;top:834.23px;font-size:15px;line-height:22.50px;color:#333;white-space:nowrap;">500</div>
<div style="left:538.28px;top:829.89px;width:119.72px;height:31.17px;background:#fff;border:1px solid #dcdcdc;"></div>
<div class="mono" style="left:549.8px;top:835.45px;font-size:15px;line-height:22.50px;color:#555;white-space:nowrap;transform:scaleX(.82);transform-origin:0 50%;">varchar</div>
<svg style="position:absolute;left:633.83px;top:843.67px;" width="8.13" height="4.97" viewBox="0 0 20 12"><path d="M2 2l8 7.500 8-7.500" stroke="#777" stroke-width="3" fill="none"/></svg>
<div style="left:800.98px;top:832.83px;width:25.75px;height:25.3px;background:#fff;border:2px solid #efefef;border-radius:3px;"></div>
<svg style="position:absolute;left:808.66px;top:840.73px;" width="10.39" height="10.39" viewBox="0 0 20 20"><path d="M3 3l14 14M17 3L3 17" stroke="#f5466c" stroke-width="2.600"/></svg>
<div class="num" style="left:326.85px;transform:translateX(-50%);top:866.30px;font-size:15px;line-height:22.50px;color:#444;white-space:nowrap;">8</div>
<div style="left:356.89px;top:869.65px;width:15.81px;height:15.81px;background:#f7f7f7;border:1.6px solid #a4a4a4;"></div>
<div class="mono" style="left:429.18px;top:866.30px;font-size:15px;line-height:22.50px;color:#333;white-space:nowrap;transform:scaleX(.82);transform-origin:0 50%;">QSXZ</div>
<div class="num" style="left:670.42px;top:866.30px;font-size:15px;line-height:22.50px;color:#333;white-space:nowrap;">500</div>
<div style="left:538.28px;top:861.97px;width:119.72px;height:31.17px;background:#fff;border:1px solid #dcdcdc;"></div>
<div class="mono" style="left:549.8px;top:867.88px;font-size:15px;line-height:22.50px;color:#555;white-space:nowrap;transform:scaleX(.82);transform-origin:0 50%;">varchar</div>
<svg style="position:absolute;left:633.83px;top:875.75px;" width="8.13" height="4.97" viewBox="0 0 20 12"><path d="M2 2l8 7.500 8-7.500" stroke="#777" stroke-width="3" fill="none"/></svg>
<div style="left:800.98px;top:864.9px;width:25.75px;height:25.3px;background:#fff;border:2px solid #efefef;border-radius:3px;"></div>
<svg style="position:absolute;left:808.66px;top:872.81px;" width="10.39" height="10.39" viewBox="0 0 20 20"><path d="M3 3l14 14M17 3L3 17" stroke="#f5466c" stroke-width="2.600"/></svg>
<div class="num" style="left:326.85px;transform:translateX(-50%);top:898.38px;font-size:15px;line-height:22.50px;color:#444;white-space:nowrap;">9</div>
<div style="left:356.89px;top:901.72px;width:15.81px;height:15.81px;background:#f7f7f7;border:1.6px solid #a4a4a4;"></div>
<div class="mono" style="left:429.18px;top:898.38px;font-size:15px;line-height:22.50px;color:#333;white-space:nowrap;transform:scaleX(.82);transform-origin:0 50%;">QSDWDM</div>
<div class="num" style="left:670.42px;top:898.38px;font-size:15px;line-height:22.50px;color:#333;white-space:nowrap;">500</div>
<div style="left:538.28px;top:894.04px;width:119.72px;height:31.17px;background:#fff;border:1px solid #dcdcdc;"></div>
<div class="mono" style="left:549.8px;top:900.32px;font-size:15px;line-height:22.50px;color:#555;white-space:nowrap;transform:scaleX(.82);transform-origin:0 50%;">varchar</div>
<svg style="position:absolute;left:633.83px;top:907.82px;" width="8.13" height="4.97" viewBox="0 0 20 12"><path d="M2 2l8 7.500 8-7.500" stroke="#777" stroke-width="3" fill="none"/></svg>
<div style="left:800.98px;top:896.98px;width:25.75px;height:25.3px;background:#fff;border:2px solid #efefef;border-radius:3px;"></div>
<svg style="position:absolute;left:808.66px;top:904.88px;" width="10.39" height="10.39" viewBox="0 0 20 20"><path d="M3 3l14 14M17 3L3 17" stroke="#f5466c" stroke-width="2.600"/></svg>
<div class="num" style="left:326.85px;transform:translateX(-50%);top:930.45px;font-size:15px;line-height:22.50px;color:#444;white-space:nowrap;">10</div>
<div style="left:356.89px;top:933.8px;width:15.81px;height:15.81px;background:#f7f7f7;border:1.6px solid #a4a4a4;"></div>
<div class="mono" style="left:429.18px;top:930.45px;font-size:15px;line-height:22.50px;color:#333;white-space:nowrap;transform:scaleX(.82);transform-origin:0 50%;">QSDWMC</div>
<div class="num" style="left:670.42px;top:930.45px;font-size:15px;line-height:22.50px;color:#333;white-space:nowrap;">500</div>
<div style="left:538.28px;top:926.12px;width:119.72px;height:31.17px;background:#fff;border:1px solid #dcdcdc;"></div>
<div class="mono" style="left:549.8px;top:932.76px;font-size:15px;line-height:22.50px;color:#555;white-space:nowrap;transform:scaleX(.82);transform-origin:0 50%;">varchar</div>
<svg style="position:absolute;left:633.83px;top:939.9px;" width="8.13" height="4.97" viewBox="0 0 20 12"><path d="M2 2l8 7.500 8-7.500" stroke="#777" stroke-width="3" fill="none"/></svg>
<div style="left:800.98px;top:929.05px;width:25.75px;height:25.3px;background:#fff;border:2px solid #efefef;border-radius:3px;"></div>
<svg style="position:absolute;left:808.66px;top:936.96px;" width="10.39" height="10.39" viewBox="0 0 20 20"><path d="M3 3l14 14M17 3L3 17" stroke="#f5466c" stroke-width="2.600"/></svg>
<div class="num" style="left:326.85px;transform:translateX(-50%);top:962.53px;font-size:15px;line-height:22.50px;color:#444;white-space:nowrap;">11</div>
<div style="left:356.89px;top:965.87px;width:15.81px;height:15.81px;background:#f7f7f7;border:1.6px solid #a4a4a4;"></div>
<div class="mono" style="left:429.18px;top:965.78px;font-size:15px;line-height:22.50px;color:#333;white-space:nowrap;transform:scaleX(.82);transform-origin:0 50%;">ZLDWDM</div>
<div class="num" style="left:670.42px;top:962.53px;font-size:15px;line-height:22.50px;color:#333;white-space:nowrap;">500</div>
<div style="left:538.28px;top:958.19px;width:119.72px;height:31.17px;background:#fff;border:1px solid #dcdcdc;"></div>
<div class="mono" style="left:549.8px;top:963.39px;font-size:15px;line-height:22.50px;color:#555;white-space:nowrap;transform:scaleX(.82);transform-origin:0 50%;">varchar</div>
<svg style="position:absolute;left:633.83px;top:971.97px;" width="8.13" height="4.97" viewBox="0 0 20 12"><path d="M2 2l8 7.500 8-7.500" stroke="#777" stroke-width="3" fill="none"/></svg>
<div style="left:800.98px;top:961.13px;width:25.75px;height:25.3px;background:#fff;border:2px solid #efefef;border-radius:3px;"></div>
<svg style="position:absolute;left:808.66px;top:969.04px;" width="10.39" height="10.39" viewBox="0 0 20 20"><path d="M3 3l14 14M17 3L3 17" stroke="#f5466c" stroke-width="2.600"/></svg>
<div style="left:538.28px;top:990.27px;width:119.72px;height:8.36px;background:#fff;border:1px solid #dcdcdc;border-bottom:none;"></div>
<div style="left:356.89px;top:997.95px;width:15.81px;height:0.68px;background:#fafafa;border:1px solid #b8b8b8;border-bottom:none;"></div>
<div class="mono" style="left:549.8px;top:993.47px;font-size:15px;line-height:22.50px;color:#555;white-space:nowrap;transform:scaleX(.82);transform-origin:0 50%;clip-path:inset(0 0 55% 0);">varchar</div>
<div style="left:800.98px;top:993.2px;width:25.75px;height:5.42px;background:#fff;border:1px solid #ececec;border-bottom:none;"></div>
<div style="left:912.11px;top:351.02px;width:551.83px;height:656.19px;background:#fff;border:2.8px solid #b6daf3;border-top:none;"></div>
<div style="left:912.11px;top:351.02px;width:551.83px;height:32.08px;background:#1296db;"></div>
<div style="left:921.37px;top:359.6px;width:15.81px;height:16.04px;background:#fff;"></div>
<div style="left:946.9px;top:355.74px;font-size:16px;line-height:24.00px;color:#cfe8f8;white-space:nowrap;">编辑规则</div>
<div style="left:1343.55px;top:367.06px;width:9.94px;height:1.58px;background:#fff;"></div>
<svg style="position:absolute;left:1389.4px;top:362.77px;" width="10.84" height="9.94" viewBox="0 0 20 20"><rect x="2" y="3" width="16" height="14" rx="2.500" fill="none" stroke="#fff" stroke-width="4"/></svg>
<svg style="position:absolute;left:1434.58px;top:362.32px;" width="11.29" height="10.84" viewBox="0 0 20 20"><path d="M2.500 2.500l15 15M17.500 2.500L2.500 17.500" stroke="#fff" stroke-width="3.400"/></svg>
<div style="left:922.05px;top:397.90px;font-size:14px;line-height:21.00px;color:#222;white-space:nowrap;">要素类型<span style="margin-left:1.5px">:</span></div>
<div style="left:1025.73px;top:392.81px;width:427.14px;height:32.08px;background:#fff;border:2px solid #e3e3e3;border-radius:3px;"></div>
<div style="left:922.05px;top:435.28px;font-size:14px;line-height:21.00px;color:#222;white-space:nowrap;">要素编码<span style="margin-left:1.5px">:</span></div>
<div style="left:1025.73px;top:430.53px;width:427.14px;height:31.4px;background:#fff;border:2px solid #e3e3e3;border-radius:3px;"></div>
<div style="left:922.05px;top:472.78px;font-size:14px;line-height:21.00px;color:#222;white-space:nowrap;">实体类型<span style="margin-left:1.5px">:</span></div>
<div style="left:1025.73px;top:468.03px;width:427.14px;height:31.4px;background:#fff;border:2px solid #e3e3e3;border-radius:3px;"></div>
<div style="left:922.05px;top:509.59px;font-size:14px;line-height:21.00px;color:#222;white-space:nowrap;">实体编码<span style="margin-left:1.5px">:</span></div>
<div style="left:1025.73px;top:504.62px;width:427.14px;height:31.85px;background:#fff;border:2px solid #e3e3e3;border-radius:3px;"></div>
<div style="left:922.05px;top:546.53px;font-size:14px;line-height:21.00px;color:#222;white-space:nowrap;">点图元<span style="margin-left:1.5px">:</span></div>
<div style="left:1025.73px;top:542.12px;width:427.14px;height:30.72px;background:#fff;border:2px solid #e3e3e3;border-radius:3px;"></div>
<div style="left:922.05px;top:584.02px;font-size:14px;line-height:21.00px;color:#222;white-space:nowrap;">线图元<span style="margin-left:1.5px">:</span></div>
<div style="left:1025.73px;top:578.94px;width:427.14px;height:31.17px;background:#fff;border:2px solid #e3e3e3;border-radius:3px;"></div>
<div style="left:922.05px;top:612.94px;font-size:14px;line-height:21.00px;color:#222;white-space:nowrap;">面图元<span style="margin-left:1.5px">:</span></div>
<div style="left:1025.73px;top:615.76px;width:427.14px;height:31.4px;background:#fff;border:2px solid #e3e3e3;border-radius:3px;"></div>
<div style="left:1036.57px;top:398.72px;font-size:13.5px;line-height:20.25px;color:#222;white-space:nowrap;font-weight:400;">草地</div>
<div class="num" style="left:1036.57px;top:435.09px;font-size:15px;line-height:22.50px;color:#777;white-space:nowrap;">810602</div>
<div style="left:1036.57px;top:473.71px;font-size:13.5px;line-height:20.25px;color:#222;white-space:nowrap;font-weight:400;">草地</div>
<div class="num" style="left:1036.57px;top:509.41px;font-size:15px;line-height:22.50px;color:#777;white-space:nowrap;">15040000</div>
<div style="left:1037.93px;top:545.88px;font-size:14.5px;line-height:21.75px;color:#222;white-space:nowrap;font-weight:400;">不生成</div>
<div style="left:1037.93px;top:580.94px;font-size:14.5px;line-height:21.75px;color:#222;white-space:nowrap;font-weight:400;">线不变</div>
<div style="left:1037.93px;top:619.20px;font-size:14.5px;line-height:21.75px;color:#222;white-space:nowrap;font-weight:400;">不生成</div>
<svg style="position:absolute;left:1428.71px;top:555.22px;" width="8.13" height="4.97" viewBox="0 0 20 12"><path d="M2 2l8 7.500 8-7.500" stroke="#999" stroke-width="3" fill="none"/></svg>
<svg style="position:absolute;left:1428.71px;top:592.26px;" width="8.13" height="4.97" viewBox="0 0 20 12"><path d="M2 2l8 7.500 8-7.500" stroke="#999" stroke-width="3" fill="none"/></svg>
<svg style="position:absolute;left:1428.71px;top:629.08px;" width="8.13" height="4.97" viewBox="0 0 20 12"><path d="M2 2l8 7.500 8-7.500" stroke="#999" stroke-width="3" fill="none"/></svg>
<div style="left:1373.14px;top:393.71px;width:79.96px;height:31.85px;background:#1296db;"></div>
<div style="left:1413.12px;transform:translateX(-50%);top:399.02px;font-size:14px;line-height:21.00px;color:#fff;white-space:nowrap;">选择</div>
<div style="left:922.05px;top:650.21px;font-size:14px;line-height:21.00px;color:#222;white-space:nowrap;">字段映射规则<span style="margin-left:1.5px">:</span></div>
<div style="left:922.5px;top:674.94px;width:28.01px;height:27.56px;background:#fff;border:2px solid #efefef;border-radius:3px;"></div>
<div style="left:931.54px;top:688.15px;width:9.94px;height:1.13px;background:#35a247;"></div>
<div style="left:935.94px;top:683.75px;width:1.13px;height:9.94px;background:#35a247;"></div>
<div style="left:955.03px;top:674.94px;width:28.01px;height:27.56px;background:#fff;border:2px solid #efefef;border-radius:3px;"></div>
<div style="left:964.07px;top:688.15px;width:9.94px;height:1.13px;background:#f24a4a;"></div>
<div style="left:922.5px;top:713.34px;width:530.15px;height:247.79px;background:#fff;border:2px solid #e4e4e4;"></div>
<div style="left:923.18px;top:809.11px;width:528.79px;height:31.62px;background:#d7ebf8;"></div>
<div style="left:923.18px;top:809.11px;width:29.36px;height:31.62px;background:#c9e3f5;"></div>
<div style="left:951.76px;top:713.34px;width:1.58px;height:30.04px;background:#dedede;"></div>
<div style="left:1023.36px;top:713.34px;width:1.58px;height:30.04px;background:#dedede;"></div>
<div style="left:1143.53px;top:713.34px;width:1.58px;height:30.04px;background:#dedede;"></div>
<div style="left:1262.57px;top:713.34px;width:1.58px;height:30.04px;background:#dedede;"></div>
<div style="left:951.76px;top:743.38px;width:1.58px;height:97.36px;background:#dedede;"></div>
<div style="left:922.5px;top:742.93px;width:530.15px;height:0.9px;background:#ececec;"></div>
<div style="left:1036.35px;top:719.70px;font-size:12px;line-height:18.00px;color:#222;white-space:nowrap;font-weight:bold;">要素字段</div>
<div style="left:1156.52px;top:719.70px;font-size:12px;line-height:18.00px;color:#222;white-space:nowrap;font-weight:bold;">实体字段</div>
<div style="left:964.97px;top:721.24px;width:15.81px;height:15.81px;background:#f7f7f7;border:1.6px solid #a4a4a4;"></div>
<div class="num" style="left:937.41px;transform:translateX(-50%);top:747.53px;font-size:15px;line-height:22.50px;color:#444;white-space:nowrap;">1</div>
<div style="left:964.97px;top:752.87px;width:15.81px;height:15.81px;background:#f7f7f7;border:1.6px solid #a4a4a4;"></div>
<div style="left:1025.28px;top:744.51px;width:118.59px;height:31.17px;background:#fff;border:1px solid #dcdcdc;"></div>
<div style="left:1145px;top:744.51px;width:117.91px;height:31.17px;background:#fff;border:1px solid #dcdcdc;"></div>
<div class="mono" style="left:1036.8px;top:749.61px;font-size:15px;line-height:22.50px;color:#666;white-space:nowrap;transform:scaleX(.82);transform-origin:0 50%;">DLMC</div>
<div class="mono" style="left:1156.97px;top:749.61px;font-size:15px;line-height:22.50px;color:#666;white-space:nowrap;transform:scaleX(.82);transform-origin:0 50%;">STMC</div>
<svg style="position:absolute;left:1120.83px;top:758.29px;" width="8.13" height="4.97" viewBox="0 0 20 12"><path d="M2 2l8 7.500 8-7.500" stroke="#777" stroke-width="3" fill="none"/></svg>
<svg style="position:absolute;left:1240.55px;top:758.29px;" width="8.13" height="4.97" viewBox="0 0 20 12"><path d="M2 2l8 7.500 8-7.500" stroke="#777" stroke-width="3" fill="none"/></svg>
<div class="num" style="left:937.41px;transform:translateX(-50%);top:780.35px;font-size:15px;line-height:22.50px;color:#444;white-space:nowrap;">2</div>
<div style="left:964.97px;top:784.6px;width:15.81px;height:15.81px;background:#f7f7f7;border:1.6px solid #a4a4a4;"></div>
<div style="left:1025.28px;top:776.24px;width:118.59px;height:31.17px;background:#fff;border:1px solid #dcdcdc;"></div>
<div style="left:1145px;top:776.24px;width:117.91px;height:31.17px;background:#fff;border:1px solid #dcdcdc;"></div>
<div class="mono" style="left:1036.8px;top:781.44px;font-size:15px;line-height:22.50px;color:#666;white-space:nowrap;transform:scaleX(.82);transform-origin:0 50%;">GDLX</div>
<div class="mono" style="left:1156.97px;top:781.44px;font-size:15px;line-height:22.50px;color:#666;white-space:nowrap;transform:scaleX(.82);transform-origin:0 50%;">CJLX</div>
<svg style="position:absolute;left:1120.83px;top:790.02px;" width="8.13" height="4.97" viewBox="0 0 20 12"><path d="M2 2l8 7.500 8-7.500" stroke="#777" stroke-width="3" fill="none"/></svg>
<svg style="position:absolute;left:1240.55px;top:790.02px;" width="8.13" height="4.97" viewBox="0 0 20 12"><path d="M2 2l8 7.500 8-7.500" stroke="#777" stroke-width="3" fill="none"/></svg>
<div class="num" style="left:937.41px;transform:translateX(-50%);top:812.09px;font-size:15px;line-height:22.50px;color:#444;white-space:nowrap;">3</div>
<div style="left:964.97px;top:816.34px;width:15.81px;height:15.81px;background:#f7f7f7;border:1.6px solid #a4a4a4;"></div>
<div style="left:1025.28px;top:807.98px;width:118.59px;height:31.17px;background:#e9f3fb;border:1px solid #dcdcdc;"></div>
<div style="left:1145px;top:807.98px;width:117.91px;height:31.17px;background:#e9f3fb;border:1px solid #dcdcdc;"></div>
<div class="mono" style="left:1036.8px;top:813.27px;font-size:15px;line-height:22.50px;color:#666;white-space:nowrap;transform:scaleX(.82);transform-origin:0 50%;">KCXS</div>
<div class="mono" style="left:1156.97px;top:813.27px;font-size:15px;line-height:22.50px;color:#666;white-space:nowrap;transform:scaleX(.82);transform-origin:0 50%;">XSLX</div>
<svg style="position:absolute;left:1120.83px;top:821.76px;" width="8.13" height="4.97" viewBox="0 0 20 12"><path d="M2 2l8 7.500 8-7.500" stroke="#777" stroke-width="3" fill="none"/></svg>
<svg style="position:absolute;left:1240.55px;top:821.76px;" width="8.13" height="4.97" viewBox="0 0 20 12"><path d="M2 2l8 7.500 8-7.500" stroke="#777" stroke-width="3" fill="none"/></svg>
<div style="left:1290.47px;top:967.45px;width:77.7px;height:31.85px;background:#fff;border:2px solid #ececec;border-radius:3px;"></div>
<div style="left:1329.32px;transform:translateX(-50%);top:972.77px;font-size:14px;line-height:21.00px;color:#222;white-space:nowrap;">取消</div>
<div style="left:1373.82px;top:967.45px;width:78.61px;height:31.85px;background:#1296db;"></div>
<div style="left:1413.12px;transform:translateX(-50%);top:972.77px;font-size:14px;line-height:21.00px;color:#fff;white-space:nowrap;">确定</div>
<div style="left:1660.01px;top:132.14px;width:259.99px;height:883.88px;background:#fff;"></div>
<svg style="position:absolute;left:1664.53px;top:140.27px;" width="16.72" height="14.91" viewBox="0 0 24 22"><path d="M1 7l11-5 11 5-11 5z" fill="#1f8fd6"/><path d="M4.500 10.500v6c2 3 13 3 15 0v-6l-7.500 3.500z" fill="#1f8fd6"/><path d="M4 15h16" stroke="#fff" stroke-width="1.600"/></svg>
<div style="left:1685.99px;top:137.00px;font-size:14px;line-height:21.00px;color:#222;white-space:nowrap;">资源接入面板</div>
<div style="left:1660.01px;top:165.12px;width:259.99px;height:1.13px;background:#e4e4e4;"></div>
<div style="left:1665.2px;top:171.22px;width:249.37px;height:30.27px;background:#fff;border:2px solid #e3e3e3;border-radius:4px;"></div>
<svg style="position:absolute;left:1674.24px;top:181.38px;" width="10.39" height="10.84" viewBox="0 0 20 20"><circle cx="8.500" cy="8.500" r="6.500" fill="none" stroke="#3a9fe0" stroke-width="2.800"/><path d="M13.500 13.500L19 19" stroke="#3a9fe0" stroke-width="3"/></svg>
<div style="left:1696.38px;top:176.08px;font-size:14px;line-height:21.00px;color:#bdbdbd;white-space:nowrap;">请输入搜索文本...</div>
<div style="left:1712.19px;top:206.12px;font-size:14px;line-height:21.00px;color:#222;white-space:nowrap;">默认目录</div>
<div style="left:1712.19px;top:233.45px;font-size:14px;line-height:21.00px;color:#222;white-space:nowrap;">计算机</div>
<div style="left:1712.19px;top:261.69px;font-size:14px;line-height:21.00px;color:#222;white-space:nowrap;">文件夹</div>
<div style="left:1712.19px;top:289.47px;font-size:14px;line-height:21.00px;color:#222;white-space:nowrap;">数据库</div>
<div style="left:1712.19px;top:317.48px;font-size:14px;line-height:21.00px;color:#222;white-space:nowrap;">文件服务</div>
<svg style="position:absolute;left:1690.5px;top:209.62px;" width="16.72" height="14.46" viewBox="0 0 24 21"><path d="M1 10.500L12 1.500l11 9-1.500 1.600L12 4.500 2.500 12.100z" fill="#1f8fd6"/><path d="M4.500 11.500L12 5.500l7.500 6V20h-5v-5h-5v5h-5z" fill="#1f8fd6"/><rect x="17" y="2.500" width="2.600" height="4" fill="#1f8fd6"/></svg>
<svg style="position:absolute;left:1690.73px;top:236.95px;" width="16.26" height="15.36" viewBox="0 0 24 22"><rect x="1" y="1" width="22" height="14.500" fill="#1f8fd6"/><rect x="9.500" y="15.500" width="5" height="3.500" fill="#1f8fd6"/><rect x="5" y="19" width="14" height="2.600" fill="#1f8fd6"/></svg>
<svg style="position:absolute;left:1691.86px;top:266.99px;" width="14.91" height="12.2" viewBox="0 0 24 20"><path d="M1 3c0-1 1-2 2-2h6l2.500 3H21c1 0 2 1 2 2v11c0 1-1 2-2 2H3c-1 0-2-1-2-2z" fill="#1f8fd6"/><rect x="10" y="8" width="9" height="2.400" fill="#fff" opacity=".9"/></svg>
<svg style="position:absolute;left:1692.54px;top:291.61px;" width="12.65" height="17.17" viewBox="0 0 20 28"><rect x="1.200" y="1.200" width="17.600" height="25.600" rx="2" fill="#fff" stroke="#4aa8e2" stroke-width="2"/><path d="M1.500 10h17M1.500 18.500h17" stroke="#4aa8e2" stroke-width="2"/></svg>
<svg style="position:absolute;left:1691.86px;top:322.33px;" width="14.91" height="12.65" viewBox="0 0 24 20"><rect x="1" y="1" width="13" height="18" fill="#1f8fd6"/><path d="M17 12v6M20.500 15v3" stroke="#1f8fd6" stroke-width="2"/></svg>
<div style="left:1660.01px;top:983.27px;width:259.99px;height:1.13px;background:#dedede;"></div>
<svg style="position:absolute;left:1670.85px;top:992.08px;" width="17.17" height="15.36" viewBox="0 0 24 22"><path d="M1 7l11-5 11 5-11 5z" fill="#1f8fd6"/><path d="M4.500 10.500v6c2 3 13 3 15 0v-6l-7.500 3.500z" fill="#1f8fd6"/><path d="M4 15h16" stroke="#fff" stroke-width="1.600"/></svg>
<div style="left:1692.54px;top:988.80px;font-size:14px;line-height:21.00px;color:#222;white-space:nowrap;">资源接入面板</div>
<div style="left:1672.88px;top:1011.73px;width:103.91px;height:1.69px;background:#1296db;"></div>
<svg style="position:absolute;left:1801.64px;top:993.43px;" width="14" height="12.65" viewBox="0 0 24 21"><rect x="1.500" y="5.500" width="21" height="14.500" rx="2" fill="none" stroke="#4aa8e2" stroke-width="1.800"/><path d="M8.500 5.500v-3h7v3M1.500 11.500h21M12 9.500v4" stroke="#4aa8e2" stroke-width="1.800" fill="none"/></svg>
<div style="left:1821.97px;top:988.80px;font-size:14px;line-height:21.00px;color:#999;white-space:nowrap;">工具箱</div>
<div style="left:0px;top:1016.02px;width:1920px;height:25.3px;background:#2b579a;"></div>
<div class="stat" style="left:1525.38px;top:1017.26px;font-size:14px;line-height:21.00px;color:#e4ebf5;white-space:nowrap;font-weight:400;">坐标<span style="margin-left:1.5px">:</span></div>
<div class="mono" style="left:1566.95px;top:1016.67px;font-size:16px;line-height:24.00px;color:#e4ebf5;white-space:nowrap;transform:scaleX(.729);transform-origin:0 50%;font-weight:400;">446.000000,-5.000000</div>
<div class="stat" style="left:1721.68px;top:1017.26px;font-size:14px;line-height:21.00px;color:#e4ebf5;white-space:nowrap;font-weight:400;">比例<span style="margin-left:1.5px">:</span></div>
<div class="mono" style="left:1767.08px;top:1016.67px;font-size:16px;line-height:24.00px;color:#b4bfe6;white-space:nowrap;transform:scaleX(.729);transform-origin:0 50%;font-weight:400;">1:1</div>
<svg style="position:absolute;left:1794.18px;top:1025.17px;" width="10.39" height="6.1" viewBox="0 0 20 12"><path d="M2 2l8 7.500 8-7.500" stroke="#e4ebf5" stroke-width="2.600" fill="none"/></svg>
<div class="mono" style="left:1830.32px;top:1016.67px;font-size:16px;line-height:24.00px;color:#e4ebf5;white-space:nowrap;transform:scaleX(.729);transform-origin:0 50%;font-weight:400;font-weight:bold;">EPSG:</div>
<div class="stat" style="left:1872.34px;top:1017.26px;font-size:14px;line-height:21.00px;color:#e4ebf5;white-space:nowrap;font-weight:400;">未知</div>
<div style="left:0px;top:1039.74px;width:1920px;height:1.58px;background:#34486b;"></div>
<svg style="position:absolute;left:1907.58px;top:1030.02px;" width="9.04" height="9.04" viewBox="0 0 20 20"><path d="M18 8v2M18 14v2M14 14v2M10 14v2" stroke="#7f9cc8" stroke-width="2"/></svg>
</div>
</body>
</html>
